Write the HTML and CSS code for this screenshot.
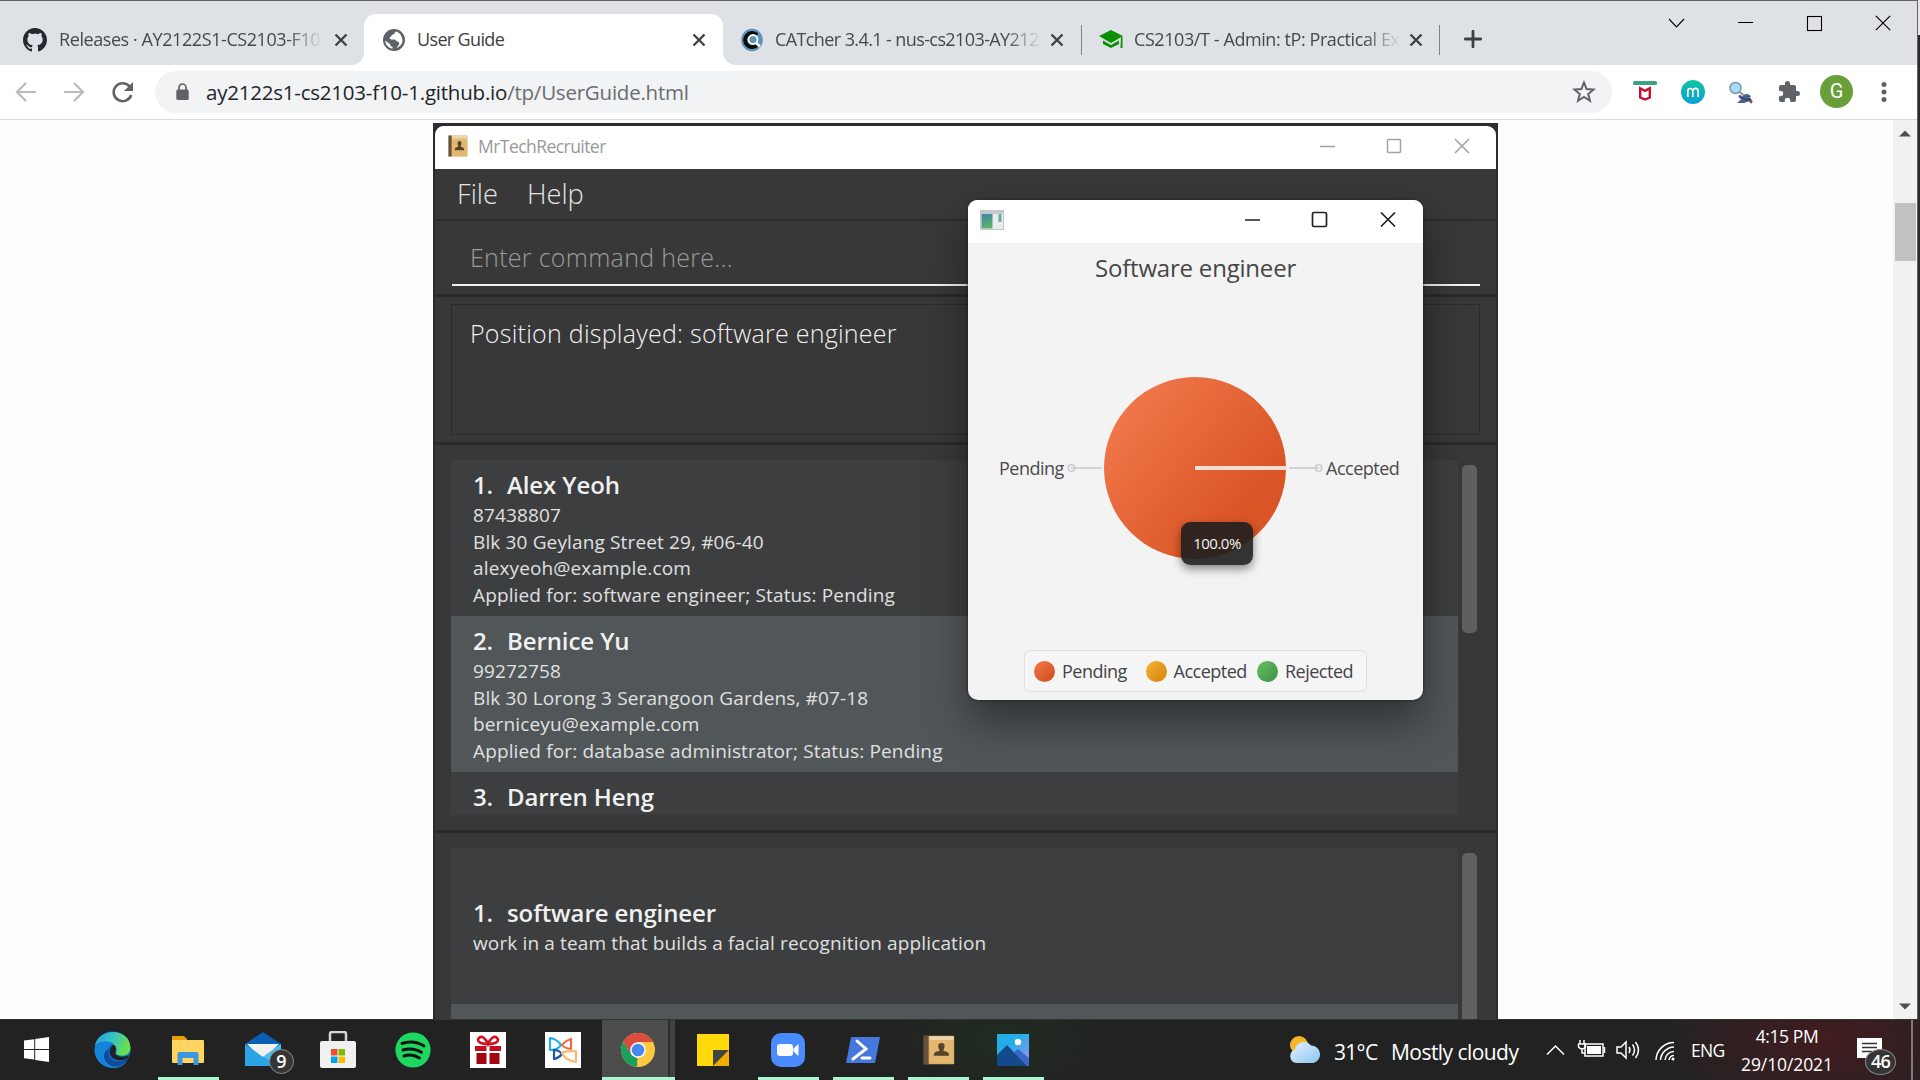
FILE: index.html
```html
<!DOCTYPE html>
<html lang="en">
<head>
<meta charset="utf-8">
<title>User Guide</title>
<link rel="stylesheet" href="styles.css">
</head>
<body>
<div class="desktop">
<div class="browser">
  <header class="tabs">
    <div class="tab tab-a">
      <svg class="fav" width="24" height="24" viewBox="0 0 16 16" fill="#24292f"><path d="M8 0C3.58 0 0 3.58 0 8c0 3.54 2.29 6.53 5.47 7.59.4.07.55-.17.55-.38 0-.19-.01-.82-.01-1.49-2.01.37-2.53-.49-2.69-.94-.09-.23-.48-.94-.82-1.13-.28-.15-.68-.52-.01-.53.63-.01 1.08.58 1.23.82.72 1.21 1.87.87 2.33.66.07-.52.28-.87.51-1.07-1.78-.2-3.64-.89-3.64-3.95 0-.87.31-1.59.82-2.15-.08-.2-.36-1.02.08-2.12 0 0 .67-.21 2.2.82.64-.18 1.32-.27 2-.27s1.36.09 2 .27c1.53-1.04 2.2-.82 2.2-.82.44 1.1.16 1.92.08 2.12.51.56.82 1.27.82 2.15 0 3.07-1.87 3.75-3.65 3.95.29.25.54.73.54 1.48 0 1.07-.01 1.93-.01 2.2 0 .21.15.46.55.38A8.01 8.01 0 0 0 16 8c0-4.42-3.58-8-8-8z"/></svg>
      <span class="label fade">Releases · AY2122S1-CS2103-F10</span>
      <svg class="x" width="14" height="14" viewBox="0 0 14 14"><path d="M1.5 1.5l11 11M12.500 1.500l-11 11"/></svg>
    </div>
    <div class="tab tab-b">
      <svg class="fav" width="22" height="22" viewBox="0 0 22 22"><circle cx="11" cy="11" r="11" fill="#5f6368"/><path d="M13 2.500c-2 1-1 2.500-3 3s-1 2-3 2.500c-1 .5 0 2.500 1.500 2.500h3c1.500 0 1.500 2 3 2s2 1 1.500 3l-2.500 3.500c3-1 6-4 6-7.500s-2.500-8-6.500-9zM2.300 11.500c0 4 3 7.500 7.200 8.200v-2c-1.500 0-2.300-1-2.300-2.500z" fill="#fff"/></svg>
      <span class="label">User Guide</span>
      <svg class="x" width="14" height="14" viewBox="0 0 14 14"><path d="M1.500 1.500l11 11M12.500 1.500l-11 11"/></svg>
    </div>
    <div class="tab tab-c">
      <svg class="fav" width="22" height="24" viewBox="0 0 22 24"><ellipse cx="11" cy="12" rx="10.800" ry="11.300" fill="#5b94b8"/><path d="M16 7a7 7 0 1 0 .5 9.500" fill="none" stroke="#0b0b0b" stroke-width="4"/><circle cx="12" cy="11.500" r="4.500" fill="none" stroke="#fff" stroke-width="1.800"/><path d="M15 15l4 3.500" stroke="#fff" stroke-width="2.500"/></svg>
      <span class="label fade">CATcher 3.4.1 - nus-cs2103-AY212</span>
      <svg class="x" width="14" height="14" viewBox="0 0 14 14"><path d="M1.500 1.500l11 11M12.500 1.500l-11 11"/></svg>
    </div>
    <div class="tab tab-d">
      <svg class="fav" width="24" height="20" viewBox="0 0 24 20" fill="#0a8f00"><path d="M0 6L12 0l12 6-12 7zM4 10.500l8 4.500 8-4.500v3.500L12 18l-8-4zM22 7h1.500v11h-2z"/></svg>
      <span class="label fade">CS2103/T - Admin: tP: Practical Ex</span>
      <svg class="x" width="14" height="14" viewBox="0 0 14 14"><path d="M1.500 1.500l11 11M12.500 1.500l-11 11"/></svg>
    </div>
    <svg class="plus" width="18" height="18" viewBox="0 0 18 18"><path d="M9 1.200v15.600M1.200 9h15.600" stroke="#3c4043" stroke-width="2.800" stroke-linecap="round"/></svg>
    <svg class="winctl" width="156" height="18" viewBox="0 0 156 18" fill="none" stroke="#000" stroke-width="1.100"><path d="M1 5l7.500 8L16 5M70 8.500h15"/><rect x="139.500" y="2.500" width="14" height="14"/></svg>
    <svg class="winx" width="16" height="16" viewBox="0 0 16 16"><path d="M.8.8l14.400 14.400M15.200.8L.8 15.200" stroke="#000" stroke-width="1.200"/></svg>
  </header>

  <div class="toolbar">
    <svg class="nav" width="140" height="24" viewBox="0 0 140 24" fill="none" stroke-width="2.200"><path d="M36 12H17.500M26 3l-9 9 9 9M64 12h18.500M74 3l9 9-9 9" stroke="#b9bbbe"/><path d="M130 7A9 9 0 1 0 131.200 15" stroke="#5f6368" stroke-width="2.600"/><path d="M133 2v9h-9z" fill="#5f6368"/></svg>
    <div class="omnibox">
      <svg width="13" height="18" viewBox="0 0 13 18"><rect x=".3" y="6.500" width="12.400" height="10.500" rx="1.500" fill="#5f6368"/><path d="M3 7V4.500a3.500 3.500 0 0 1 7 0V7" fill="none" stroke="#5f6368" stroke-width="1.700"/></svg>
      <span class="url">ay2122s1-cs2103-f10-1.github.io<i>/tp/UserGuide.html</i></span>
      <svg class="star" width="24" height="24" viewBox="0 0 24 24"><path d="M12 2.500l2.600 6.500 7 .5-5.400 4.500 1.800 6.800-6-3.800-6 3.800 1.800-6.800L2.400 9.500l7-.5z" fill="none" stroke="#5f6368" stroke-width="2"/></svg>
    </div>
    <svg class="ext mc" width="24" height="24" viewBox="0 0 24 24"><rect y="1" width="24" height="4" rx="1.500" fill="#3ba383"/><path d="M7.200 8.200l4.800 2.600 4.800-2.600v9.300L12 19.500l-4.800-2z" fill="none" stroke="#c8102e" stroke-width="2.400"/></svg>
    <svg class="ext" width="24" height="24" viewBox="0 0 24 24"><defs><linearGradient id="mg" x2="0" y2="1"><stop stop-color="#0fc69d"/><stop offset="1" stop-color="#0b9fd8"/></linearGradient></defs><circle cx="12" cy="12" r="12" fill="url(#mg)"/><path d="M6.800 17V11a2.500 2.500 0 0 1 5 0v6M11.800 11a2.600 2.600 0 0 1 5.400 0v6" fill="none" stroke="#fff" stroke-width="1.700"/></svg>
    <svg class="ext" width="24" height="24" viewBox="0 0 24 24"><circle cx="6.500" cy="8" r="5.500" fill="#a4dcff" stroke="#8295a5" stroke-width="1.500"/><path d="M10.500 12l4 3" stroke="#8b8b8b" stroke-width="2"/><path d="M9.500 17c0-3 2-2 4-.5 1-3.500 7-3.500 8.500 0l-1.500 1c2 1 3 3 2 5l-4-1-3 1.500H8l4-3.500z" fill="#4a6090"/><path d="M12.500 17l4 3 5-1" stroke="#27345a" fill="none"/><path d="M20 20l4 1-2 3z" fill="#9c4a35"/></svg>
    <svg class="ext puz" width="24" height="24" viewBox="0 0 24 24" fill="#5f6368"><path d="M20.500 11H19V7a2 2 0 0 0-2-2h-4V3.500a2.500 2.500 0 0 0-5 0V5H4a2 2 0 0 0-2 2v3.800h1.500a2.700 2.700 0 0 1 0 5.400H2V20a2 2 0 0 0 2 2h3.800v-1.500a2.700 2.700 0 0 1 5.400 0V22H17a2 2 0 0 0 2-2v-4h1.500a2.500 2.500 0 0 0 0-5z"/></svg>
    <span class="avatar">G</span>
    <svg class="dots" width="6" height="22" viewBox="0 0 6 22" fill="#5f6368"><circle cx="3" cy="3.500" r="2.500"/><circle cx="3" cy="11" r="2.500"/><circle cx="3" cy="18.500" r="2.500"/></svg>
  </div>

  <main class="page">
    <div class="shot">
      <div class="app">
        <div class="titlebar">
          <svg width="20" height="22" viewBox="0 0 20 22"><use href="#book"/></svg>
          <span class="apptitle">MrTechRecruiter</span>
          <svg class="appctl" width="151" height="16" viewBox="0 0 151 16" fill="none" stroke="#a3a3a3" stroke-width="1.500"><path d="M0 8.500h15M135 1l14 14M149 1l-14 14"/><rect x="67.500" y="1.500" width="13" height="13" rx="1"/></svg>
        </div>
        <div class="menubar"><span>File</span><span>Help</span></div>
        <div class="command"><div class="field">Enter command here...</div></div>
        <div class="result"><div class="box">Position displayed: software engineer</div></div>
        <div class="listpane people">
          <div class="list">
            <div class="card"><h3><b>1.</b>Alex Yeoh</h3><p>87438807</p><p>Blk 30 Geylang Street 29, #06-40</p><p>alexyeoh@example.com</p><p>Applied for: software engineer; Status: Pending</p></div>
            <div class="card alt"><h3><b>2.</b>Bernice Yu</h3><p>99272758</p><p>Blk 30 Lorong 3 Serangoon Gardens, #07-18</p><p>berniceyu@example.com</p><p>Applied for: database administrator; Status: Pending</p></div>
            <div class="card"><h3><b>3.</b>Darren Heng</h3></div>
          </div>
          <div class="thumb"></div>
        </div>
        <div class="listpane jobs">
          <div class="list">
            <div class="card job"><h3><b>1.</b>software engineer</h3><p>work in a team that builds a facial recognition application</p></div>
            <div class="card alt"></div>
          </div>
          <div class="thumb"></div>
        </div>
      </div>

      <div class="popup">
        <div class="poptitle">
          <svg width="24" height="20" viewBox="0 0 24 20"><defs><linearGradient id="wg" x2=".3" y2="1"><stop stop-color="#3d84a8"/><stop offset="1" stop-color="#58b568"/></linearGradient></defs><rect width="24" height="20" fill="#c3c8cc"/><rect x="1" y="4" width="22" height="15" fill="#ececec"/><rect x="1.500" y="4" width="11" height="14.500" fill="url(#wg)"/><rect x="18.500" y="4" width="3" height="8" fill="#69aca0"/></svg>
          <svg class="popctl" width="151" height="17" viewBox="0 0 151 17" fill="none" stroke="#222" stroke-width="1.700"><path d="M0 9h15M136 1.500l14 14M150 1.500l-14 14"/><rect x="67.500" y="1.500" width="14" height="14" rx="1.500"/></svg>
        </div>
        <h2>Software engineer</h2>
        <div class="chart">
          <span class="lab">Pending</span>
          <svg width="256" height="184" viewBox="0 0 256 184"><defs><linearGradient id="pg" x1=".1" y1=".15" x2=".78" y2=".72"><stop stop-color="#f1774a"/><stop offset="1" stop-color="#d95526"/></linearGradient></defs><circle cx="128" cy="92" r="91" fill="url(#pg)"/><path d="M128 92h92" stroke="#f7ddd3" stroke-width="4"/><path d="M4 92h31M222 92h30" stroke="#c9c9c9" stroke-width="1.500"/><g fill="none" stroke="#cbcbcb" stroke-width="1.500"><circle cx="4.500" cy="92" r="3.300"/><circle cx="251.500" cy="92" r="3.300"/></g></svg>
          <span class="lab">Accepted</span>
        </div>
        <div class="tip">100.0%</div>
        <div class="legend"><span class="red">Pending</span><span class="yel">Accepted</span><span class="grn">Rejected</span></div>
      </div>
    </div>
    <div class="scroll">
      <svg width="12" height="7" viewBox="0 0 12 7"><path d="M0 6.500L6 .5l6 6z" fill="#505050"/></svg>
      <div class="grip"></div>
      <svg class="down" width="12" height="7" viewBox="0 0 12 7"><path d="M0 .5l6 6 6-6z" fill="#505050"/></svg>
    </div>
  </main>
</div>
<div class="behind"></div>

<footer class="taskbar">
  <div class="slot s-start"><svg width="25" height="25" viewBox="0 0 25 25" fill="#fff"><path d="M0 3.600l10.200-1.400v9.700H0zM11.200 2L25 0v11.900H11.200zM0 12.900h10.200v9.700L0 21.200zM11.200 12.900H25V25l-13.800-2z"/></svg></div>
  <div class="slot"><svg width="37" height="37" viewBox="0 0 37 37"><defs><linearGradient id="e1" x2="1" y2=".3"><stop stop-color="#2a9bd9"/><stop offset=".5" stop-color="#35c1c9"/><stop offset="1" stop-color="#67e04f"/></linearGradient></defs><circle cx="18.500" cy="18.500" r="18" fill="#0c69bd"/><path d="M1 15C3-3 36-5 36.500 17c0 7-7 9-12.500 7-4-1.500-.5-2-1.500-6C20 9 4 10 1 15z" fill="url(#e1)"/><path d="M.6 19C1 10 14 8 20 13c-8 1-9 11-4 16 5 5 13 5 17 1-5 8-15 8-20 6C6 34 .3 27 .6 19z" fill="#1584d8"/><path d="M15 20c-3 9 9 15 19 7-6 13-22 10-24-1 0-6 3-8 5-6z" fill="#124a98"/><path d="M20 14c3 2 2 5 1 7 0 4 6 6 12 4l2 1c-8 7-21 2-19-7 .5-3 2-5 4-5z" fill="#202020"/></svg></div>
  <div class="slot on"><svg width="34" height="30" viewBox="0 0 34 30"><path d="M1 1h12l3 3v5H1z" fill="#e0a008"/><rect x="1" y="5" width="32" height="23" rx="1" fill="#ffd460"/><path d="M6.500 30V19q0-2 2-2h17q2 0 2 2v11h-5v-7h-11v7z" fill="#3b97df"/></svg></div>
  <div class="slot mail"><svg width="44" height="44" viewBox="0 0 44 44"><path d="M4 16L22 4l18 12v8H4z" fill="#0a5fb4"/><path d="M6 16h32L22 32z" fill="#f2f2f2"/><path d="M4 16l18 13 18-13v22H4z" fill="#2ba3e4"/><path d="M22 29l18-13v22z" fill="#49c0ee"/></svg><em>9</em></div>
  <div class="slot"><svg width="36" height="38" viewBox="0 0 36 38"><path d="M10 12V3q0-2 2-2h12q2 0 2 2v9" fill="none" stroke="#d5d5d5" stroke-width="2.500"/><rect y="10" width="36" height="27" rx="2" fill="#f1f1f1"/><path d="M11 18h6.500v6.500H11z" fill="#f25022"/><path d="M18.500 18H25v6.500h-6.500z" fill="#7fba00"/><path d="M11 25.500h6.500V32H11z" fill="#00a4ef"/><path d="M18.500 25.500H25V32h-6.500z" fill="#ffb900"/></svg></div>
  <div class="slot"><svg width="36" height="36" viewBox="0 0 36 36"><circle cx="18" cy="18" r="17.600" fill="#1ed760"/><path d="M7 11.500q12-4 22 2.500M8 18q10-3 18.500 2.200M9 24q8-2.500 15.500 2" fill="none" stroke="#111" stroke-width="3" stroke-linecap="round"/></svg></div>
  <div class="slot"><svg width="36" height="36" viewBox="0 0 36 36"><path d="M0 0h36v36H0z" fill="#fff"/><path d="M18 12C10 12 6 9 9 6s7 1 9 6c2-5 6-9 9-6s-1 6-9 6z" fill="none" stroke="#cf1120" stroke-width="2.600"/><path d="M5 14h11.500v5H5zM19.500 14H31v5H19.500z" fill="#c50e1c"/><path d="M6.500 21h10v11h-10zM19.500 21h10v11h-10z" fill="#a30610"/></svg></div>
  <div class="slot"><svg width="36" height="36" viewBox="0 0 36 36" fill="none" stroke-width="2.200" stroke-linejoin="round"><path d="M0 0h36v36H0z" fill="#fff"/><path d="M5 18V6q7 1 11 7-3 5-11 5z" stroke="#1eaef0"/><path d="M26 7v10q-7-1-9-4 3-4 9-6z" stroke="#f26b3e"/><path d="M9 18q5 0 8 4-3 4-8 5z" stroke="#2952a3"/><path d="M17 21q2-2 14-2v11q-10-1-14-9z" stroke="#f9b872"/></svg></div>
  <div class="slot on chrome"><svg width="34" height="34" viewBox="0 0 34 34"><circle cx="17" cy="17" r="17" fill="#fdca3f"/><path d="M2.300 8.500A17 17 0 0 1 32 9H17l-7.500 12z" fill="#dd4b3e"/><path d="M2.300 8.500L10 21.500l6.500 4-.5 8.500A17 17 0 0 1 2.300 8.500z" fill="#17a05e"/><path d="M17 25l-.5 9 7.500-13z" fill="#fdca3f"/><circle cx="17" cy="17" r="7.800" fill="#fff"/><circle cx="17" cy="17" r="6.300" fill="#4688f1"/></svg></div>
  <div class="slot"><svg width="32" height="32" viewBox="0 0 32 32"><path d="M0 0h32v16L16 32H0z" fill="#ffd90a"/><path d="M16 16h16L16 32z" fill="#444"/><path d="M32 16v16H16z" fill="#f0ad00"/></svg></div>
  <div class="slot on"><svg width="34" height="34" viewBox="0 0 34 34"><rect width="34" height="34" rx="10" fill="#4a8cff"/><rect x="6" y="11" width="16" height="12" rx="3" fill="#fff"/><path d="M22.500 15.500L27.500 11v12l-5-4.500z" fill="#fff"/></svg></div>
  <div class="slot on"><svg width="36" height="28" viewBox="0 0 36 28"><path d="M6 1h29l-5 26H1z" fill="#4478dc"/><path d="M12 5l9 8-13 10M17 22h8" fill="none" stroke="#fff" stroke-width="3" stroke-linecap="round"/></svg></div>
  <div class="slot on"><svg class="bookicon" width="32" height="30" viewBox="0 0 20 22" preserveAspectRatio="none"><g id="book"><rect x=".5" y=".5" width="19" height="21" rx=".8" fill="#d9a552"/><rect x="4" y="1" width="15" height="20" fill="#e2b871"/><rect x="4" y="1" width="15" height="2.500" fill="#ecd7b4"/><rect x=".5" y=".5" width="3" height="21" fill="#66503f"/><path d="M9.500 8a2 2.100 0 0 1 4 0c0 1.800-.8 2.300-.8 3.700 2.500.5 3.600 1 3.600 3.500H6.700c0-2.500 1-3 3.600-3.500 0-1.400-.8-1.900-.8-3.700z" fill="#55432d"/></g></svg></div>
  <div class="slot on"><svg width="32" height="32" viewBox="0 0 32 32"><defs><linearGradient id="ph" x2="1" y2="1"><stop offset=".4" stop-color="#23aee9"/><stop offset="1" stop-color="#ac8df0"/></linearGradient></defs><path d="M0 0h32v32H0z" fill="url(#ph)"/><circle cx="21" cy="8" r="3.200" fill="#fff"/><path d="M10 32V24l11-9 11 9v8z" fill="#3a68c4"/><path d="M0 21L10 11l14 15 6 6H0z" fill="#134a8c"/></svg></div>
  <div class="tray">
    <svg class="weather" width="32" height="30" viewBox="0 0 32 30"><defs><linearGradient id="cl" x2="1" y2="1"><stop stop-color="#e4f3ff"/><stop offset="1" stop-color="#8cc4ee"/></linearGradient></defs><circle cx="10" cy="10" r="9" fill="#f7b52c"/><path d="M7 28a7 7 0 0 1-1-13.500 9 9 0 0 1 16-4 9 9 0 0 1 3 17.500z" fill="url(#cl)"/></svg>
    <span class="temp">31°C</span><span class="cloudy">Mostly cloudy</span>
    <svg class="icons" width="130" height="24" viewBox="0 0 130 24" fill="none" stroke="#fff" stroke-width="1.500"><path d="M1 16.500L9.500 8 18 16.500"/><rect x="39" y="6" width="18" height="12"/><path d="M41 8h14v8H41z" fill="#fff" stroke="none"/><path d="M58.500 9v6M34 2v4M38 2v4M32.500 6h7v3q-3.500 4-7 0zM36 10v5h3"/><path d="M71 9h4l5-5v16l-5-5h-4zM83 9q2 3 0 6M86.500 6.500q4 5.500 0 11M89.500 4q6 8 0 16"/><path d="M110 22A18 18 0 0 1 128 4.500M114.500 22A14 14 0 0 1 128 9M119 22a9 9 0 0 1 9-8.500M123 22a5 5 0 0 1 5-4.500"/><circle cx="127" cy="21" r="1.500" fill="#fff" stroke="none"/></svg>
    <span class="eng">ENG</span>
    <div class="clock"><span>4:15 PM</span><span class="date">29/10/2021</span></div>
    <div class="note"><svg width="25" height="26" viewBox="0 0 25 26"><path d="M0 0h25v20h-8v6l-6-6H0z" fill="#fff"/><path d="M5 5.500h15M5 9.500h15M5 13.500h10" stroke="#333" stroke-width="1.300"/></svg><em>46</em></div>
    <div class="peek"></div>
  </div>
</footer>
</div>
</body>
</html>
```
FILE: styles.css
```css
* { box-sizing: border-box; margin: 0; padding: 0; }
body { width: 1920px; height: 1080px; overflow: hidden; font-family: "Open Sans", "Noto Sans", sans-serif; }
svg { display: block; flex: none; }
em, i { font-style: normal; }
.desktop { display: grid; grid-template: 1019px 61px / 1918px 2px; width: 1920px; height: 1080px; }
.browser { display: flex; flex-direction: column; height: 1019px; border-top: 1px solid #606266; border-right: 1px solid #606266; background: #fdfdfd; overflow: hidden; }
.behind { background: linear-gradient(#e8e8e8 35px, #2a2a2a 35px); }

/* tab strip */
.tabs { display: flex; height: 64px; background: #dee1e6; flex: none; }
.tab { display: flex; align-items: center; height: 51px; margin-top: 13px; font-size: 18px; color: #45484c; white-space: nowrap; }
.label { overflow: hidden; font-stretch: 90%; letter-spacing: -.65px; line-height: 26px; padding-bottom: 2px; }
.fade { -webkit-mask-image: linear-gradient(90deg, #000 calc(100% - 36px), transparent); mask-image: linear-gradient(90deg, #000 calc(100% - 36px), transparent); }
.x path { stroke: #3c4043; stroke-width: 2.3; }
.tab-a { width: 364px; padding-left: 23px; }
.tab-a .label { width: 264px; margin: 0 10px 0 12px; letter-spacing: -.42px; }
.tab-a .x { margin-left: 1px; }
.tab-b { position: relative; width: 359px; padding-left: 19px; background: #fff; border-radius: 12px 12px 0 0; color: #3c4043; }
.tab-b::before, .tab-b::after { content: ""; position: absolute; bottom: 0; width: 12px; height: 12px; }
.tab-b::before { left: -12px; background: radial-gradient(circle at 0 0, transparent 11.5px, #fff 12px); }
.tab-b::after { right: -12px; background: radial-gradient(circle at 100% 0, transparent 11.5px, #fff 12px); }
.tab-b .label { width: 275px; margin-left: 12px; }
.tab-c { width: 359px; padding-left: 18px; position: relative; }
.tab-c .label { width: 266px; margin: 0 9px 0 12px; letter-spacing: -.6px; }
.tab-d { width: 358px; padding-left: 17px; position: relative; }
.tab-d .label { width: 266px; margin: 0 9px 0 11px; letter-spacing: -.42px; }
.tab-c::after, .tab-d::after { content: ""; position: absolute; right: 0; top: 11px; width: 1px; height: 30px; background: #80848a; }
.plus { margin: 29px 0 0 24px; }
.winctl { margin: 13px 0 0 186px; }
.winx { margin: 14px 0 0 51px; }

/* toolbar */
.toolbar { display: flex; align-items: center; height: 55px; padding: 0 0 1px; background: #fff; border-bottom: 1px solid #d9dadc; flex: none; }
.omnibox { display: flex; align-items: center; width: 1457px; height: 42px; margin-left: 15px; padding: 0 16px 0 21px; background: #f1f3f4; border-radius: 21px; }
.url { margin-left: 17px; font-size: 20.5px; line-height: 30px; letter-spacing: -.22px; color: #222428; white-space: nowrap; }
.url i { color: #6a6d71; }
.star { margin-left: auto; }
.ext { margin-left: 24px; }
.mc { margin-left: 21px; }
.puz { margin-left: 24px; }
.avatar { width: 33px; height: 33px; margin-left: 19px; border-radius: 50%; background: #689f38; color: #fff; font: 400 20px/33px Roboto, sans-serif; text-align: center; }
.dots { margin-left: 28px; }

/* page */
.page { display: flex; flex: 1; justify-content: flex-end; height: 899px; }
.scroll { display: flex; flex-direction: column; align-items: center; width: 24px; margin-left: 395px; padding: 10px 0 9px; background: #f1f1f1; }
.grip { width: 21px; height: 58px; margin-top: 66px; background: #c1c1c1; }
.down { margin-top: auto; }
.shot { position: relative; width: 1065px; height: 896px; margin-top: 3px; padding: 3px 2px 0 1px; background: #2b2d30; overflow: hidden; }
.app { width: 1062px; height: 893px; background: #383838; border-radius: 9px 9px 0 0; overflow: hidden; border-left: 1px solid #282828; }
.titlebar { display: flex; align-items: center; height: 43px; padding: 0 25px 3px 13px; background: #fff; }
.apptitle { margin-left: 10px; font-size: 17.5px; letter-spacing: -.55px; line-height: 24px; color: #999; }
.appctl { margin-left: auto; }
.menubar { display: flex; gap: 29px; height: 52px; padding: 6px 0 0 22px; border-bottom: 2px solid #2b2b2b; font-size: 27.2px; line-height: 37px; font-weight: 300; color: #e4e4e4; }
.command { height: 76px; padding: 11px 16px 0 17px; border-bottom: 3px solid #2a2a2a; }
.field { height: 54px; padding-left: 18px; border-bottom: 2px solid #f2f2f2; font-size: 25px; letter-spacing: .3px; line-height: 51px; font-weight: 300; color: #9b9b9b; }
.result { height: 148px; padding: 7px 16px; border-bottom: 3px solid #2a2a2a; }
.box { height: 131px; padding-left: 18px; border: 1px solid #2b2b2b; font-size: 25px; letter-spacing: .25px; line-height: 56px; font-weight: 300; color: #f2f2f2; }
.listpane { display: flex; padding: 15px 16px 0; }
.people { height: 388px; border-bottom: 3px solid #2a2a2a; }
.list { width: 1007px; background: #3c3e3f; overflow: hidden; }
.people .list { height: 355px; }
.jobs { height: 187px; }
.card { height: 156px; padding: 8px 0 0 22px; background: #3c3e3f; color: #e0e0e0; white-space: nowrap; }
.alt { background: #515658; }
.card h3 { display: flex; font-size: 24px; line-height: 34px; font-weight: 600; letter-spacing: -.1px; color: #f0f0f0; }
.card h3 b { width: 34px; font-weight: 600; }
.card p { font-size: 19px; letter-spacing: .14px; line-height: 26.7px; }
.job { padding-top: 48px; }
.thumb { width: 15px; height: 168px; margin: 5px 0 0 4px; border-radius: 5px; background: #606060; }
.jobs .thumb { height: 200px; }

/* chart window */
.popup { position: absolute; left: 535px; top: 77px; width: 455px; height: 500px; background: #f3f3f3; border-radius: 10px; box-shadow: 0 22px 44px rgba(0,0,0,.42), 0 0 3px #222; overflow: visible; }
.poptitle { display: flex; align-items: center; justify-content: space-between; height: 43px; padding: 0 27px 4px 12px; background: #fff; border-radius: 9px 9px 0 0; }
h2 { height: 50px; text-align: center; font-size: 24px; letter-spacing: -.2px; line-height: 50px; font-weight: 400; color: #464646; }
.chart { display: flex; align-items: center; height: 184px; margin-top: 83px; }
.lab { font-size: 18px; letter-spacing: -.5px; line-height: 26px; color: #4a4a4a; }
.lab:first-child { width: 69px; margin-left: 31px; }
.chart svg { margin: 0 3px 0 -1px; }
.tip { position: absolute; left: 213px; top: 322px; width: 72px; height: 43px; border-radius: 9px; background: rgba(30,30,30,.9); box-shadow: 0 4px 10px rgba(0,0,0,.45); color: #f3f3f3; font-size: 15px; letter-spacing: -.5px; line-height: 43px; text-align: center; }
.legend { position: relative; display: flex; width: 343px; height: 42px; margin: 90px 0 0 56px; padding-left: 9px; align-items: center; border: 1px solid #e0e0e0; border-radius: 6px; background: #f5f5f5; font-size: 18px; letter-spacing: -.5px; color: #444; }
.legend span { display: flex; align-items: center; width: 111.5px; gap: 7px; flex: none; }
.legend span::before { content: ""; width: 21px; height: 21px; border-radius: 50%; flex: none; }
.red::before { background: linear-gradient(135deg, #f3794c, #d95526 75%); }
.yel::before { background: linear-gradient(135deg, #f5b23a, #dd8e12 75%); }
.grn::before { background: linear-gradient(135deg, #6abf69, #469c48 75%); }

/* taskbar */
.taskbar { grid-column: 1 / 3; display: flex; border-top: 1px solid #343434; background: radial-gradient(ellipse 170px 90px at 1830px 20px, #421c20, transparent), radial-gradient(ellipse 110px 60px at 1000px 20px, #1f2c20, transparent), #222; color: #fff; }
.slot { position: relative; display: flex; align-items: center; justify-content: center; width: 75px; padding-bottom: 1px; flex: none; }
.s-start { padding-right: 3px; }
.on::after { content: ""; position: absolute; left: 8px; right: 6px; bottom: 0; height: 3px; background: #a9f7d0; }
.chrome { background: linear-gradient(90deg, transparent 2px, #4c4c4c 2px, #4c4c4c 68px, #2c2c2c 68px, #2c2c2c 70px, #414141 70px); }
.chrome::after { left: 2px; right: 0; }
.bookicon { margin-left: 2px; }
em { display: block; border-radius: 50%; border: 1.500px solid #8a8a8a; background: #353535; font-weight: 600; text-align: center; }
.mail em { position: absolute; left: 44px; top: 29px; width: 25px; height: 25px; font-size: 18px; line-height: 22px; }
.tray { display: flex; align-items: center; flex: 1; padding-left: 239px; }
.temp, .cloudy { font-size: 21px; letter-spacing: -.55px; line-height: 30px; padding-top: 4px; }
.temp { width: 57px; margin-left: 13px; letter-spacing: -.7px; }
.cloudy { width: 155px; white-space: nowrap; }
.eng { width: 49px; margin-left: 15px; font-size: 17.500px; letter-spacing: -.65px; }
.clock { display: flex; flex-direction: column; align-items: center; width: 94px; font-size: 17.500px; line-height: 28px; letter-spacing: -.4px; white-space: nowrap; }
.date { letter-spacing: -.1px; }
.note { position: relative; width: 25px; margin: 1px 0 0 23px; }
.note em { position: absolute; left: 8px; top: 11px; width: 31px; height: 26px; font-size: 18px; line-height: 23px; letter-spacing: -.8px; }
.peek { width: 2px; height: 60px; margin-left: 29px; background: #857679; }
```
